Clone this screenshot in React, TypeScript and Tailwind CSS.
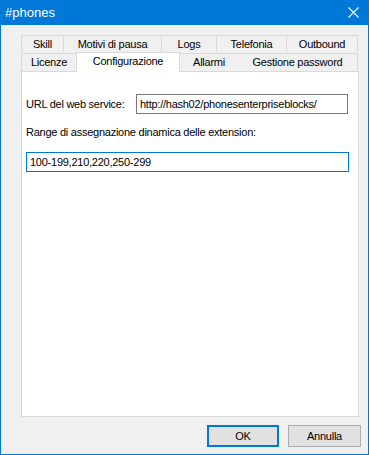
import React from 'react';

const rowOne = [
  { label: 'Skill', w: 'w-[43px]' },
  { label: 'Motivi di pausa', w: 'w-[98px]' },
  { label: 'Logs', w: 'w-[55px]' },
  { label: 'Telefonia', w: 'w-[70px]' },
  { label: 'Outbound', w: 'w-[71px]' },
];

const rowTwo = [
  { label: 'Licenze', w: 'w-[55px]', active: false },
  { label: 'Configurazione', w: 'w-[104px]', active: true },
  { label: 'Allarmi', w: 'w-[58px]', active: false },
  { label: 'Gestione password', w: 'w-[120px]', active: false },
];

const App: React.FC = () => {
  return (
    <div
      className="w-[369px] h-[455px] flex flex-col bg-[#f0f0f0] border border-t-0 border-[#0078d7] text-[11px] tracking-[-0.25px] text-black overflow-hidden whitespace-nowrap"
      style={{ fontFamily: '"Liberation Sans", Arial, sans-serif' }}
    >
      {/* Title bar */}
      <div className="h-[25px] bg-[#0078d7] flex items-center justify-between pl-[4px] pr-[9px] shrink-0">
        <span className="text-white text-[13px] tracking-normal leading-none">#phones</span>
        <svg width="11" height="11" viewBox="0 0 11 11" className="text-white">
          <path d="M0.5 0.5 L10.5 10.5 M10.5 0.5 L0.5 10.5" stroke="currentColor" strokeWidth="1.1" />
        </svg>
      </div>

      {/* Tabs + panel */}
      <div className="flex flex-col pl-[20px] pr-[9px] pt-[10px]">
        <div className="flex">
          {rowOne.map((t, i) => (
            <div
              key={t.label}
              className={`${t.w} h-[17px] flex items-center justify-center border-t border-r border-[#d9d9d9] ${i === 0 ? 'border-l' : ''} leading-none`}
            >
              {t.label}
            </div>
          ))}
        </div>
        <div className="flex items-end relative z-10 -mb-px">
          {rowTwo.map((t, i) =>
            t.active ? (
              <div
                key={t.label}
                className={`${t.w} h-[20px] flex items-start pt-[3px] justify-center bg-white border-t border-l border-r border-[#d9d9d9] leading-none`}
              >
                {t.label}
              </div>
            ) : (
              <div
                key={t.label}
                className={`${t.w} h-[19px] flex items-center justify-center border-t border-[#d9d9d9] ${i === 0 ? 'border-l' : ''} ${i === rowTwo.length - 1 ? 'border-r' : ''} border-b leading-none`}
              >
                {t.label}
              </div>
            )
          )}
        </div>
        <div className="h-[346px] bg-white border border-[#d9d9d9] flex flex-col px-[4px] pt-[22px]">
          <div className="flex items-center">
            <span className="w-[110px]">URL del web service:</span>
            <div className="w-[212px] h-[20px] border border-[#7a7a7a] flex items-center px-[3px]">
              http://hash02/phonesenterpriseblocks/
            </div>
          </div>
          <div className="mt-[8px] h-[20px] flex items-center">
            Range di assegnazione dinamica delle extension:
          </div>
          <div className="mt-[10px] w-[323px] h-[20px] border border-[#0078d7] flex items-center px-[3px]">
            100-199,210,220,250-299
          </div>
        </div>
      </div>

      {/* Buttons */}
      <div className="flex justify-end gap-[9px] pr-[7px] pt-[8px]">
        <button className="w-[72px] h-[22px] bg-[#e1e1e1] border-2 border-[#0078d7] flex items-center justify-center">
          OK
        </button>
        <button className="w-[73px] h-[22px] bg-[#e1e1e1] border border-[#adadad] flex items-center justify-center">
          Annulla
        </button>
      </div>
    </div>
  );
};

export default App;
